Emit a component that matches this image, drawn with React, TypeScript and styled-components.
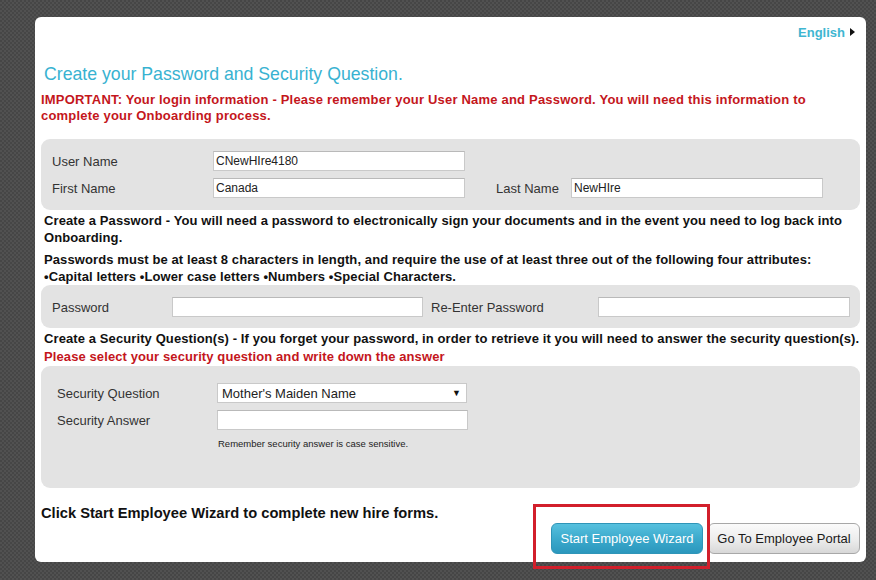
import styled, { createGlobalStyle } from "styled-components";

const GlobalStyle = createGlobalStyle`
  html, body {
    margin: 0;
    padding: 0;
  }
  body {
    width: 876px;
    height: 580px;
    overflow: hidden;
    background-color: #4b4b4b;
    background-image: repeating-conic-gradient(#515151 0 25%, #464646 0 50%);
    background-size: 4px 4px;
    font-family: "Liberation Sans", Arial, sans-serif;
  }
`;

export default function App() {
  return (
    <>
      <GlobalStyle />
      <Page>
        <Card>
          <LangRow>
            <a className="lang" href="#">
              English
            </a>
            <span className="arrow" />
          </LangRow>
          <Title>Create your Password and Security Question.</Title>
          <Notice>
            IMPORTANT: Your login information - Please remember your User Name and Password. You
            will need this information to complete your Onboarding process.
          </Notice>

          <NamePanel>
            <Label>User Name</Label>
            <Input defaultValue="CNewHIre4180" />
            <span />
            <span />
            <span />
            <Label>First Name</Label>
            <Input defaultValue="Canada" />
            <span />
            <Label>Last Name</Label>
            <Input defaultValue="NewHIre" />
          </NamePanel>

          <Info>
            Create a Password - You will need a password to electronically sign your documents and in
            the event you need to log back into Onboarding.
          </Info>
          <Info $gap={5}>
            Passwords must be at least 8 characters in length, and require the use of at least three
            out of the following four attributes:
            <br />
            •Capital letters •Lower case letters •Numbers •Special Characters.
          </Info>

          <PasswordPanel>
            <Label>Password</Label>
            <Input type="password" />
            <span />
            <Label>Re-Enter Password</Label>
            <Input type="password" />
          </PasswordPanel>

          <Info $lineHeight={18} $gap={2}>
            Create a Security Question(s) - If you forget your password, in order to retrieve it you
            will need to answer the security question(s).
            <br />
            <span className="red">Please select your security question and write down the answer</span>
          </Info>

          <SecurityPanel>
            <Label>Security Question</Label>
            <SelectBox>
              <span>Mother's Maiden Name</span>
              <span className="caret">▼</span>
            </SelectBox>
            <Label>Security Answer</Label>
            <Input $width={251} />
            <span />
            <Hint>Remember security answer is case sensitive.</Hint>
          </SecurityPanel>

          <Footer>
            <FooterText>Click Start Employee Wizard to complete new hire forms.</FooterText>
            <ButtonGroup>
              <Highlight />
              <Button $primary>Start Employee Wizard</Button>
              <Button>Go To Employee Portal</Button>
            </ButtonGroup>
          </Footer>
        </Card>
      </Page>
    </>
  );
}

const Page = styled.main`
  padding: 17px 10px 0 35px;
`;

const Card = styled.section`
  box-sizing: border-box;
  width: 831px;
  height: 545px;
  padding: 0 6px;
  background: #ffffff;
  border-radius: 6px;
`;

const LangRow = styled.div`
  display: flex;
  justify-content: flex-end;
  align-items: center;
  height: 30px;
  padding: 0 5px 0 0;

  a.lang {
    font-size: 13px;
    font-weight: 700;
    color: #3fb6d1;
    text-decoration: none;
  }

  span.arrow {
    width: 0;
    height: 0;
    margin-left: 5px;
    border-top: 4px solid transparent;
    border-bottom: 4px solid transparent;
    border-left: 5px solid #111111;
  }
`;

const Title = styled.h1`
  margin: 16px 0 0 3px;
  font-size: 17.7px;
  font-weight: 400;
  line-height: 22px;
  color: #38b2d1;
`;

const Notice = styled.p`
  margin: 7px 0 0;
  font-size: 13px;
  font-weight: 700;
  letter-spacing: 0.2px;
  line-height: 16px;
  color: #c4161c;
`;

const Panel = styled.div`
  display: grid;
  align-items: center;
  box-sizing: border-box;
  background: #e3e3e3;
  border-radius: 9px;
`;

const NamePanel = styled(Panel)`
  grid-template-columns: 161px 252px 31px 75px 252px;
  row-gap: 7px;
  margin-top: 15px;
  padding: 12px 11px 12px;
`;

const PasswordPanel = styled(Panel)`
  grid-template-columns: 120px 251px 8px 167px 252px;
  padding: 12px 11px 11px;
`;

const SecurityPanel = styled(Panel)`
  grid-template-columns: 160px 251px;
  row-gap: 7px;
  height: 122px;
  align-content: start;
  padding: 17px 16px 0;
`;

const Label = styled.span`
  font-size: 13px;
  color: #333333;
  white-space: nowrap;
`;

const Input = styled.input<{ $width?: number }>`
  box-sizing: border-box;
  width: ${(p) => (p.$width ? `${p.$width}px` : "100%")};
  height: 20px;
  margin: 0;
  padding: 0 2px;
  border: 1px solid #c9c9c9;
  border-top-color: #b9b9b9;
  background: #ffffff;
  font-family: "Liberation Sans", Arial, sans-serif;
  font-size: 12px;
  color: #222222;
  outline: none;
`;

const SelectBox = styled.div`
  display: flex;
  justify-content: space-between;
  align-items: center;
  box-sizing: border-box;
  width: 250px;
  height: 20px;
  padding: 0 5px 0 4px;
  border: 1px solid #c9c9c9;
  background: #ffffff;
  font-size: 13px;
  color: #222222;

  span.caret {
    font-size: 9px;
    color: #111111;
  }
`;

const Hint = styled.span`
  margin-top: 1px;
  padding-left: 1px;
  font-size: 9.5px;
  color: #222222;
`;

const Info = styled.p<{ $gap?: number; $lineHeight?: number }>`
  margin: ${(p) => p.$gap ?? 2}px 0 0 3px;
  font-size: 13px;
  font-weight: 700;
  letter-spacing: 0.1px;
  line-height: ${(p) => p.$lineHeight ?? 17}px;
  color: #111111;

  span.red {
    color: #c4161c;
  }
`;

const Footer = styled.div`
  display: flex;
  justify-content: space-between;
  align-items: flex-start;
`;

const FooterText = styled.p`
  margin: 17px 0 0;
  font-size: 14.7px;
  font-weight: 700;
  line-height: 16px;
  color: #111111;
`;

const ButtonGroup = styled.div`
  position: relative;
  display: flex;
  gap: 5px;
  margin-top: 35px;
`;

const Button = styled.button<{ $primary?: boolean }>`
  box-sizing: border-box;
  width: 152px;
  height: 31px;
  padding: 0;
  border-radius: 6px;
  font-family: "Liberation Sans", Arial, sans-serif;
  font-size: 13px;
  cursor: pointer;
  border: 1px solid ${(p) => (p.$primary ? "#2f95b8" : "#a8a8a8")};
  color: ${(p) => (p.$primary ? "#ffffff" : "#1a1a1a")};
  background: ${(p) =>
    p.$primary
      ? "linear-gradient(#56c0de, #3aa8cb 55%, #2b97bd)"
      : "linear-gradient(#fbfbfb, #ececec 55%, #d8d8d8)"};
`;

const Highlight = styled.div`
  position: absolute;
  left: -18px;
  top: -19px;
  box-sizing: border-box;
  width: 177px;
  height: 65px;
  border: 3px solid #d21f2b;
  pointer-events: none;
`;
